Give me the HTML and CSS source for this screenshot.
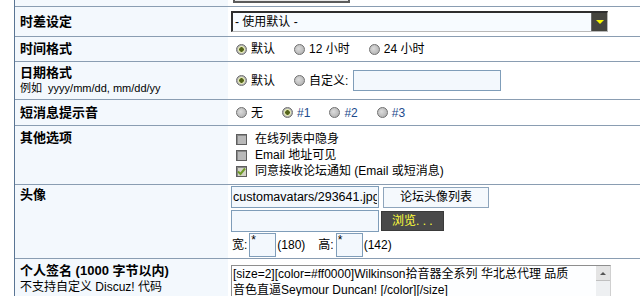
FILE: index.html
```html
<!DOCTYPE html>
<html>
<head>
    <title>个人资料</title>
    <link rel="stylesheet" href="styles.css">
</head>
<body>
    <div class="form">
        <div class="row cut">
            <div class="label"></div>
            <div class="value top"><div class="prev"></div></div>
        </div>

        <div class="row r-timeoffset">
            <div class="label"><b>时差设定</b></div>
            <div class="value">
                <div class="select">
                    <span class="select-text">- 使用默认 -</span>
                    <span class="select-arrow"><span class="tri"></span></span>
                </div>
            </div>
        </div>

        <div class="row r-timeformat">
            <div class="label"><b>时间格式</b></div>
            <div class="value">
                <span class="opt"><span class="radio checked"></span>默认</span>
                <span class="opt"><span class="radio"></span>12 小时</span>
                <span class="opt"><span class="radio"></span>24 小时</span>
            </div>
        </div>

        <div class="row r-dateformat">
            <div class="label col">
                <b>日期格式</b>
                <span class="hint">例如&nbsp; yyyy/mm/dd, mm/dd/yy</span>
            </div>
            <div class="value">
                <span class="opt"><span class="radio checked"></span>默认</span>
                <span class="opt"><span class="radio"></span>自定义:</span>
                <input type="text" class="txt datefmt">
            </div>
        </div>

        <div class="row r-pmsound">
            <div class="label"><b>短消息提示音</b></div>
            <div class="value">
                <span class="opt"><span class="radio"></span>无</span>
                <span class="opt"><span class="radio checked"></span><a>#1</a></span>
                <span class="opt"><span class="radio"></span><a>#2</a></span>
                <span class="opt"><span class="radio"></span><a>#3</a></span>
            </div>
        </div>

        <div class="row r-other">
            <div class="label top"><b>其他选项</b></div>
            <div class="value col">
                <span class="chk-line"><span class="checkbox"></span>在线列表中隐身</span>
                <span class="chk-line"><span class="checkbox"></span>Email 地址可见</span>
                <span class="chk-line"><span class="checkbox checked"><svg width="9" height="9" viewBox="0 0 9 9"><path d="M1 4.5 L3.5 7 L8 1.5" fill="none" stroke="#6f9a2a" stroke-width="2"/></svg></span>同意接收论坛通知 (Email 或短消息)</span>
            </div>
        </div>

        <div class="row r-avatar">
            <div class="label top"><b>头像</b></div>
            <div class="value col top">
                <div class="line">
                    <input type="text" class="txt avatar" value="customavatars/293641.jpg">
                    <span class="btn">论坛头像列表</span>
                </div>
                <div class="line">
                    <input type="text" class="txt avatar">
                    <span class="btn dark">浏览. . .</span>
                </div>
                <div class="line size">
                    宽: <input type="text" class="txt small" value="*">(180)
                    <span class="gap"></span>
                    高: <input type="text" class="txt small" value="*">(142)
                </div>
            </div>
        </div>

        <div class="row r-sign">
            <div class="label col top">
                <b>个人签名 (1000 字节以内)</b>
                <span class="hint2">不支持自定义 Discuz! 代码</span>
            </div>
            <div class="value top">
                <div class="textarea">
                    <div class="ta-text">[size=2][color=#ff0000]Wilkinson拾音器全系列 华北总代理 品质<br>音色直逼Seymour Duncan! [/color][/size]</div>
                    <div class="scroll"><span class="up"><span class="tri-up"></span></span></div>
                </div>
            </div>
        </div>
    </div>
</body>
</html>
```

FILE: styles.css
```css
html, body {
    margin: 0;
    overflow: hidden;
    background: #fff;
}
body {
    font-family: "Liberation Sans", "Noto Sans CJK SC", sans-serif;
    font-size: 12px;
    color: #000;
}
.form {
    margin-left: 14px;
    width: 625px;
    border-left: 1px solid #5a7594;
}
.row {
    display: flex;
    border-top: 1px solid #8a9db2;
}
.row.cut {
    border-top: none;
    height: 6px;
    overflow: hidden;
}
.label {
    width: 208px;
    padding-left: 5px;
    background: #f3f8fd;
    display: flex;
    align-items: center;
    font-size: 13px;
    line-height: 16px;
}
.value {
    flex: 1;
    padding-left: 3px;
    display: flex;
    align-items: center;
    line-height: 16px;
}
.col {
    flex-direction: column;
    align-items: flex-start;
    justify-content: center;
}
.top {
    align-items: flex-start;
    justify-content: flex-start;
}
.prev {
    width: 113px;
    height: 1px;
    margin-left: 2px;
    border: 2px solid #5c5c5c;
    border-top: none;
    background: #e8e8e8;
}

.r-timeoffset { height: 29px; }
.r-timeformat { height: 24px; }
.r-dateformat { height: 37px; }
.r-pmsound { height: 25px; }
.r-other { height: 58px; }
.r-avatar { height: 73px; }
.r-sign { height: 37px; overflow: hidden; }

.r-other .label { padding-top: 4px; }
.r-avatar .label { padding-top: 2px; }
.r-avatar .value { padding-top: 1px; }
.r-sign .label { padding-top: 4px; }
.r-sign .value { padding-top: 6px; }

.hint {
    font-size: 11px;
    margin-top: -1px;
}
.hint2 {
    font-size: 12px;
}

/* select */
.select {
    width: 374px;
    height: 18px;
    border-top: 2px solid #2e2e2e;
    border-left: 2px solid #2e2e2e;
    border-right: 1px solid #b8b8b8;
    border-bottom: 1px solid #b8b8b8;
    background: #f7fbff;
    display: flex;
    align-items: center;
    justify-content: space-between;
}
.select-text {
    padding-left: 2px;
}
.select-arrow {
    width: 15px;
    height: 18px;
    background: #45453f;
    border-left: 1px solid #6a6a6a;
    display: flex;
    align-items: center;
    justify-content: center;
}
.tri {
    width: 0;
    height: 0;
    border-left: 4px solid transparent;
    border-right: 4px solid transparent;
    border-top: 4px solid #f5f500;
}

/* radios */
.opt {
    display: inline-flex;
    align-items: center;
    margin-right: 14px;
}
.opt a {
    color: #1b4a8c;
}
.radio {
    width: 9px;
    height: 9px;
    margin: 0 4px 0 5px;
    border: 1px solid #6f6f6f;
    border-radius: 50%;
    background: radial-gradient(circle at 40% 40%, #dcdcdc, #a8a8a8);
}
.radio.checked {
    background: radial-gradient(circle, #55641a 0 2px, #e1e6b4 2.6px 3.4px, #b4b4b4 3.8px);
}
.r-dateformat .opt:nth-child(2) {
    margin-right: 5px;
}

/* inputs */
.txt {
    box-sizing: border-box;
    border: 1px solid #7f9db9;
    background: #f3f8fd;
    font-family: "Liberation Sans", "Noto Sans CJK SC", sans-serif;
    font-size: 12px;
    padding: 0 1px;
    margin: 0;
    outline: none;
}
.datefmt {
    width: 148px;
    height: 21px;
}
.avatar {
    width: 148px;
    height: 22px;
    font-size: 12.5px;
}
.small {
    width: 27px;
    height: 24px;
    padding-top: 0;
    vertical-align: middle;
    line-height: 12px;
    padding-bottom: 10px;
    margin: 0 1px 0 2px;
}
.line {
    display: flex;
    align-items: center;
    margin-bottom: 2px;
}
.line.size {
    margin-top: -1px;
    padding-left: 1px;
}
.gap {
    width: 13px;
}
.btn {
    box-sizing: border-box;
    height: 21px;
    margin-left: 4px;
    width: 106px;
    justify-content: center;
    border: 1px solid #8ea5bc;
    background: #f5f9fd;
    display: inline-flex;
    align-items: center;
    font-size: 12px;
}
.btn.dark {
    margin-left: 2px;
    height: 20px;
    width: 63px;
    justify-content: flex-start;
    padding: 0 0 0 10px;
    background: #4a4a4a;
    border-color: #3a3a3a;
    color: #ffff3c;
}

/* checkboxes */
.chk-line {
    display: flex;
    align-items: center;
    height: 16px;
}
.checkbox {
    box-sizing: border-box;
    width: 11px;
    height: 11px;
    margin: 0 8px 0 5px;
    border: 1px solid #5e5e5e;
    background: #b9b9b9;
    box-shadow: inset 1px 1px 0 #8a8a8a;
    display: inline-flex;
    align-items: center;
    justify-content: center;
}
.checkbox.checked {
    background: #d3d3c6;
}

/* textarea */
.textarea {
    width: 378px;
    height: 40px;
    border: 1px solid #8e8e8e;
    border-right-color: #d0d0d0;
    background: #fdfeff;
    display: flex;
    justify-content: space-between;
}
.ta-text {
    padding: 0 0 0 1px;
    line-height: 16px;
    white-space: nowrap;
}
.scroll {
    width: 14px;
    background: #eef0f2;
}
.up {
    display: flex;
    width: 14px;
    height: 14px;
    background: #e4e4e4;
    border-bottom: 1px solid #c0c0c0;
    align-items: center;
    justify-content: center;
}
.tri-up {
    width: 0;
    height: 0;
    border-left: 3px solid transparent;
    border-right: 3px solid transparent;
    border-bottom: 3px solid #555;
}
```
